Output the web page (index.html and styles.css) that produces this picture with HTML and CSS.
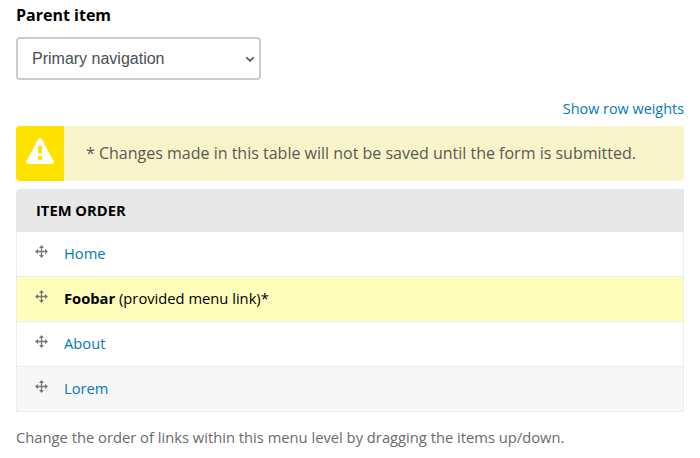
FILE: index.html
```html
<!DOCTYPE html>
<html lang="en"><head><meta charset="utf-8"><title>Menu item order</title><link rel="stylesheet" href="styles.css"></head>
<body>
<label class="label" for="parent">Parent item</label>
<div class="select-wrap"><select id="parent" class="select"><option>Primary navigation</option></select><svg class="chevron" viewBox="0 0 10 7"><path d="M1.3 1.2L5 4.9L8.7 1.2" fill="none" stroke="#4a4f55" stroke-width="1.6"/></svg></div>
<div class="toggle"><a>Show row weights</a></div>
<div class="warning"><div class="warning-icon"><svg width="28" height="26" viewBox="0 0 28 26"><path fill="#fff" fill-rule="evenodd" d="M12.2 1.1Q14 -.9 15.8 1.1L27.6 23.2Q28.6 25.5 26.3 26H1.7Q-.6 25.5.4 23.2ZM12 8V15.6H16V8ZM12 18V22H16V18Z"/></svg></div><div class="warning-text">* Changes made in this table will not be saved until the form is submitted.</div></div>
<svg class="defs"><symbol id="move" viewBox="0 0 13 13"><path d="M6.5 1V12M1 6.5H12" stroke="#787878" stroke-width="1.3"/><path d="M6.5 0L9 3H4ZM6.5 13L9 10H4ZM0 6.5L3 4V9ZM13 6.5L10 4V9Z" fill="#787878"/></symbol></svg>
<table class="table"><thead><tr><th>ITEM ORDER</th></tr></thead><tbody>
<tr><td><div class="cell"><svg class="handle"><use href="#move"/></svg><a>Home</a></div></td></tr>
<tr class="changed"><td><div class="cell"><svg class="handle"><use href="#move"/></svg><span><b>Foobar</b> (provided menu link)*</span></div></td></tr>
<tr><td><div class="cell"><svg class="handle"><use href="#move"/></svg><a>About</a></div></td></tr>
<tr class="even"><td><div class="cell"><svg class="handle"><use href="#move"/></svg><a>Lorem</a></div></td></tr>
</tbody></table>
<p class="help">Change the order of links within this menu level by dragging the items up/down.</p>
</body></html>
```
FILE: styles.css
```css
* { box-sizing: border-box; }
body { margin: 0; padding: 4px 16px 0; height: 458px; overflow: hidden; background: #fff; color: #000; font: 14.72px/22px "Open Sans", sans-serif; }
.label { display: block; font-size: 16px; font-weight: 700; line-height: 22px; margin-bottom: 11px; }
.select-wrap { position: relative; width: 245px; height: 43px; }
.select { appearance: none; width: 245px; height: 43px; border: 2px solid #ccc; border-radius: 4px; background: #fff; color: #495057; padding: 0 0 0 14px; font: 16px "Liberation Sans", sans-serif; }
.chevron { position: absolute; right: 6px; top: 19px; width: 10px; height: 7px; pointer-events: none; }
a { color: #0678be; }
.toggle { text-align: right; margin: 18px 0 6px; font-size: 14.4px; }
.warning { display: flex; height: 55px; border-radius: 4px; overflow: hidden; background: #f9f4c9; }
.warning-icon { width: 48px; background: #ffe200; display: flex; align-items: center; justify-content: center; padding-bottom: 5px; }
.warning-text { padding-left: 22px; line-height: 54px; font-size: 16px; color: #5a5a55; }
.defs { display: none; }
.table { width: 100%; margin-top: 8px; border-spacing: 0; border-collapse: separate; }
th { height: 43px; padding: 0 20px 2px; text-align: left; background: #e8e8e8; border-radius: 4px 0 0 0; font-weight: 700; }
td { height: 45px; padding: 0 19px 2px; border: 1px solid #ececec; border-top: 0; }
.cell { display: flex; align-items: center; }
.handle { width: 13px; height: 13px; margin: -4px 16px 0 -1px; }
.changed td { background: #ffb; }
.even td { background: #f7f7f7; }
.help { margin: 14px 0 0; color: #6b6b6b; font-size: 14.74px; }
```
